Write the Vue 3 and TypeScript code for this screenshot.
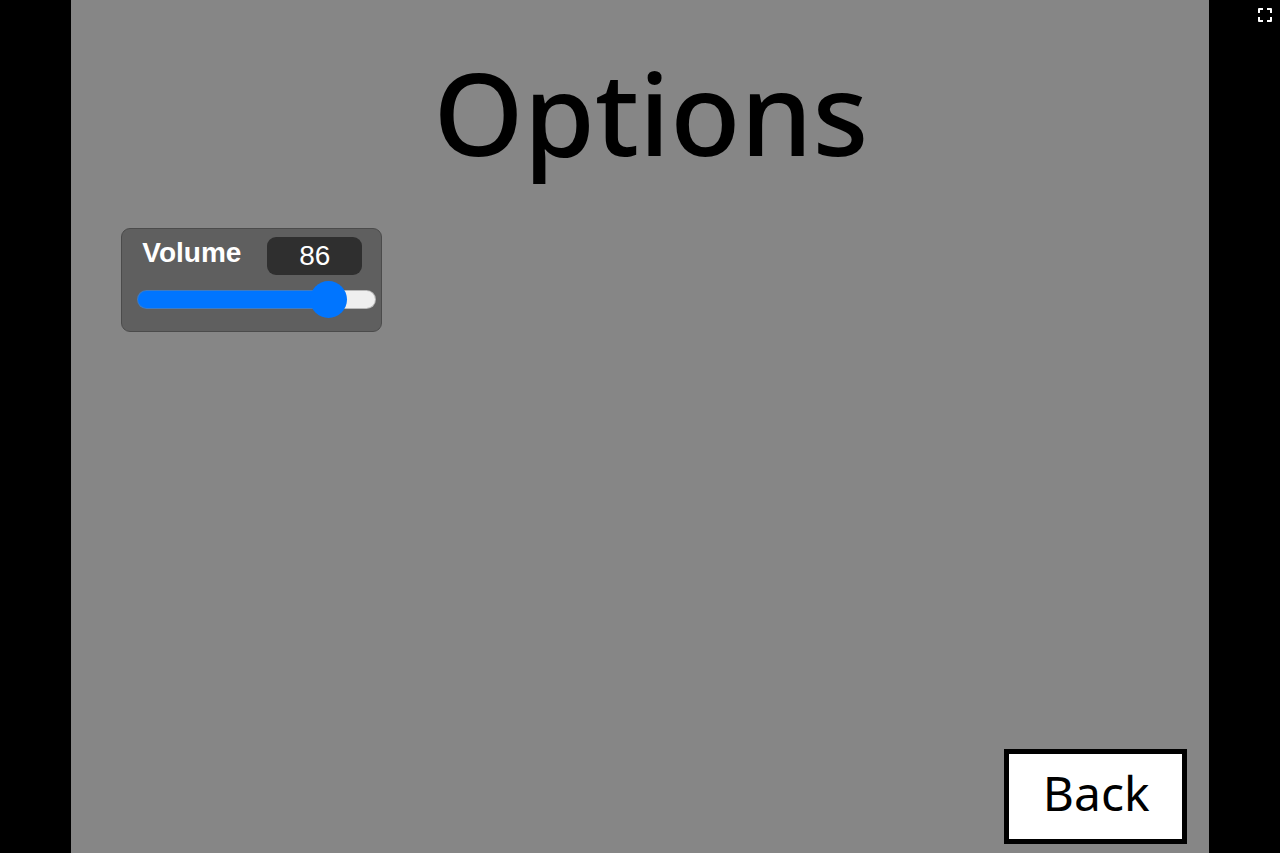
<script setup lang="ts">
import { computed, ref } from 'vue'

const volume = ref<number>(86)
const root = ref<HTMLElement | null>(null)

// The filled part of the track ends under the thumb.
const fill = computed(() => ({ '--fill': `${volume.value}%` }))

function toggleFullscreen(): void {
  if (document.fullscreenElement) {
    document.exitFullscreen()
  } else {
    root.value?.requestFullscreen()
  }
}
</script>

<template>
  <div ref="root" class="player">
    <main class="stage">
      <h1 class="title">Options</h1>

      <section class="monitor">
        <div class="monitor-row">
          <label class="monitor-label" for="volume">Volume</label>
          <output class="monitor-value" for="volume">{{ volume }}</output>
        </div>
        <input
          id="volume"
          v-model.number="volume"
          class="slider"
          type="range"
          min="0"
          max="100"
          :style="fill"
        />
      </section>

      <button class="back" type="button">Back</button>
    </main>

    <button class="fullscreen" type="button" aria-label="Full screen" @click="toggleFullscreen">
      <svg
        viewBox="0 0 14 14"
        width="14"
        height="14"
        fill="none"
        stroke="#fff"
        stroke-width="2"
        stroke-linejoin="round"
      >
        <path d="M1 5V1H5M9 1H13V5M13 9V13H9M5 13H1V9" />
      </svg>
    </button>
  </div>
</template>

<style>
body {
  margin: 0;
  background: #000;
}
</style>

<style scoped>
.player {
  position: relative;
  display: flex;
  justify-content: center;
  height: 100vh;
  overflow: hidden;
  background: #000;
}

.stage {
  box-sizing: border-box;
  display: flex;
  flex-direction: column;
  align-items: flex-start;
  height: 100%;
  aspect-ratio: 4 / 3;
  padding: 34px 22px 9px 50px;
  background: #868686;
}

.title {
  align-self: center;
  margin: 0 6px 38px 0;
  color: #000;
  font: 500 115px/156px 'Noto Sans', sans-serif;
}

.monitor {
  box-sizing: border-box;
  width: 261px;
  padding: 8px 5px 14px 15px;
  border: 1px solid #4b4b4b;
  border-radius: 9px;
  background: #5f5f5f;
  color: #fff;
  font: 28px/38px 'Liberation Sans', Arial, sans-serif;
}

.monitor-row {
  display: flex;
  align-items: flex-start;
  justify-content: space-between;
  padding: 0 14px 0 5px;
}

.monitor-label {
  font-weight: 700;
  line-height: 32px;
}

.monitor-value {
  width: 95px;
  border-radius: 9px;
  background: #2f2f2f;
  text-align: center;
}

.slider {
  display: block;
  width: 100%;
  height: 36px;
  margin: 6px 0 0;
  appearance: none;
  background: transparent;
  cursor: pointer;
}

.slider::-webkit-slider-runnable-track {
  box-sizing: border-box;
  height: 19px;
  border: 1px solid rgba(130, 130, 130, 0.5);
  border-radius: 10px;
  background: linear-gradient(to right, #0075ff var(--fill), #efefef var(--fill)) border-box;
}

.slider::-webkit-slider-thumb {
  width: 37px;
  height: 37px;
  margin-top: -10px;
  appearance: none;
  border: 0;
  border-radius: 50%;
  background: #0075ff;
}

.back {
  align-self: flex-end;
  margin-top: auto;
  padding: 5px 32px 13px 34px;
  border: 5px solid #000;
  background: #fff;
  color: #000;
  font: 400 48px/67px 'Noto Sans', sans-serif;
  cursor: pointer;
}

.fullscreen {
  position: absolute;
  top: 8px;
  right: 8px;
  display: flex;
  padding: 0;
  border: 0;
  background: none;
  cursor: pointer;
}
</style>
